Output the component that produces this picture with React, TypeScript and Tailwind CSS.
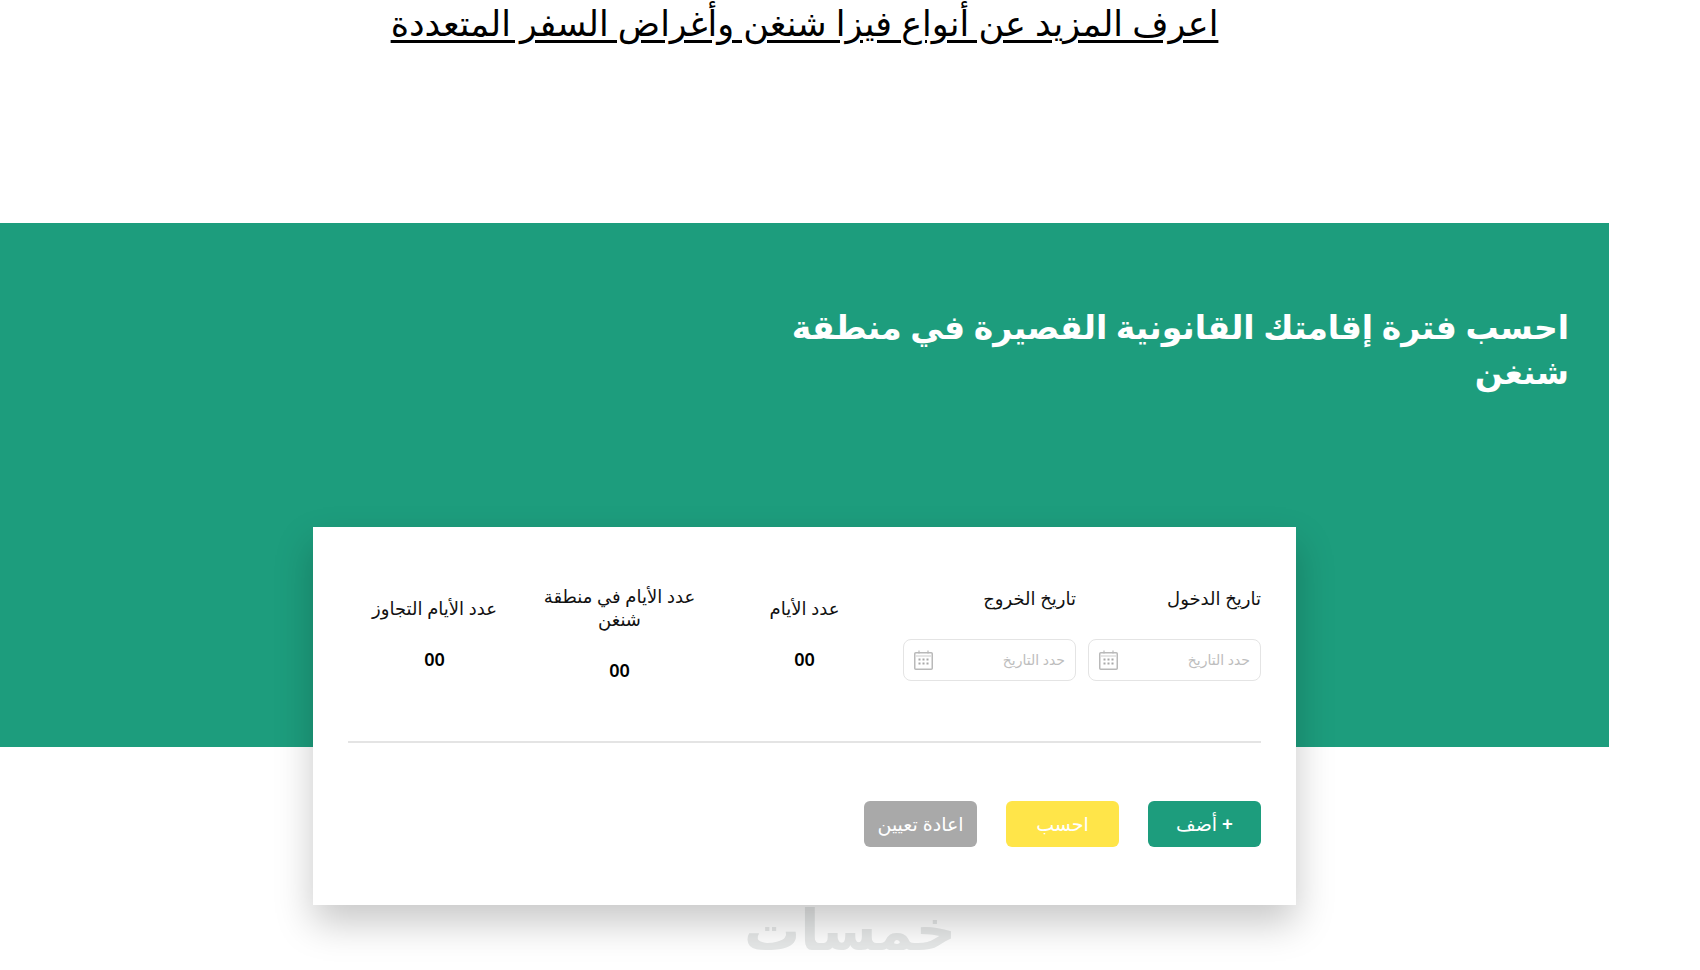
const fontStack = "font-['Noto_Sans','DejaVu_Sans',sans-serif]";

function CalendarIcon() {
  return (
    <svg width="19" height="20" viewBox="0 0 19 20" fill="none" aria-hidden="true" className="shrink-0">
      <rect x="0.75" y="2.75" width="17.5" height="16.5" rx="1" stroke="#b9b9b9" strokeWidth="1.5" />
      <path d="M1 6h17" stroke="#dcdcdc" strokeWidth="1.5" />
      <path d="M5 0.5v3M14 0.5v3" stroke="#b9b9b9" strokeWidth="1.2" />
      <g fill="#a8a8a8">
        <rect x="4.5" y="8.5" width="2" height="2" />
        <rect x="8.5" y="8.5" width="2" height="2" />
        <rect x="12.5" y="8.5" width="2" height="2" />
        <rect x="4.5" y="12.5" width="2" height="2" />
        <rect x="8.5" y="12.5" width="2" height="2" />
        <rect x="12.5" y="12.5" width="2" height="2" />
      </g>
    </svg>
  );
}

function DateField({ label }: { label: string }) {
  return (
    <div className="flex flex-col">
      <div className="text-[18px] leading-[23px] text-[#111] mb-[29px]">{label}</div>
      <div className="h-[42px] rounded-[8px] border border-[#e4e4e4] flex items-center justify-between px-[10px]">
        <span className="text-[14px] text-[#bdbdbd]">حدد التاريخ</span>
        <CalendarIcon />
      </div>
    </div>
  );
}

function Stat({ label }: { label: string }) {
  return (
    <div className="flex flex-col items-center text-center">
      <div className="text-[18px] leading-[23px] text-[#111] mb-[27px]">{label}</div>
      <div className="text-[18px] leading-[24px] font-semibold text-black">00</div>
    </div>
  );
}

export default function App() {
  return (
    <div className={`relative h-[970px] w-[1700px] overflow-hidden bg-white ${fontStack}`}>
      {/* watermark under the card */}
      <div className="absolute left-[738px] top-[892px] h-[58px] w-[224px] overflow-hidden text-center text-[56px] leading-[72px] font-bold text-[#e6e8e8]">
        خمسات
      </div>

      <div dir="rtl" className="relative w-[1609px]">
        <div className="h-[223px] text-center">
          <a className="text-[35px] leading-[46px] text-black underline underline-offset-4">
            اعرف المزيد عن أنواع فيزا شنغن وأغراض السفر المتعددة
          </a>
        </div>

        <section className="h-[524px] bg-[#1d9d7d] pt-[81px] pr-[40px]">
          <h2 className="w-[800px] text-[33px] leading-[45px] font-bold text-white">
            احسب فترة إقامتك القانونية القصيرة في منطقة شنغن
          </h2>
        </section>

        {/* calculator card */}
        <div className="mx-auto -mt-[220px] h-[378px] w-[983px] bg-white px-[35px] pt-[58px] shadow-[0_18px_36px_rgba(0,0,0,0.22)]">
          <div className="grid h-[95px] grid-cols-5 items-center gap-x-[12px]">
            <DateField label="تاريخ الدخول" />
            <DateField label="تاريخ الخروج" />
            <Stat label="عدد الأيام" />
            <Stat label="عدد الأيام في منطقة شنغن" />
            <Stat label="عدد الأيام التجاوز" />
          </div>

          <div className="mt-[61px] border-t-2 border-[#e4e4e4]" />

          <div className="mt-[58px] flex gap-[29px]">
            <button className="h-[46px] w-[113px] rounded-[6px] bg-[#1d9d7d] text-[19px] text-white">
              <span className="font-bold">+</span> أضف
            </button>
            <button className="h-[46px] w-[113px] rounded-[6px] bg-[#ffe549] text-[19px] text-white">احسب</button>
            <button className="h-[46px] w-[113px] rounded-[6px] bg-[#a9a9a9] text-[19px] text-white">اعادة تعيين</button>
          </div>
        </div>
      </div>
    </div>
  );
}
